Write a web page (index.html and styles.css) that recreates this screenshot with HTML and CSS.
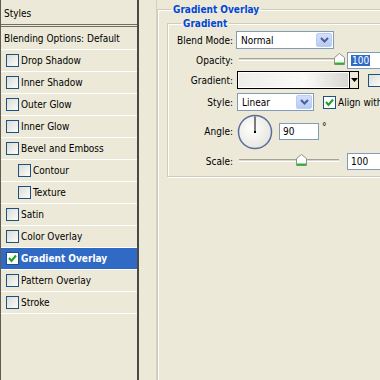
FILE: index.html
```html
<!DOCTYPE html>
<html lang="en">
<head>
	<meta charset="UTF-8">
	<title>Layer Style</title>
	<link rel="stylesheet" href="styles.css">
</head>
<body>
	<div class="dialog">
		<!--左侧样式列表-->
		<div class="styles-list">
			<div class="list-head">Styles</div>
			<div class="list-row blend">Blending Options: Default</div>
			<div class="list-row"><span class="cb"></span>Drop Shadow</div>
			<div class="list-row"><span class="cb"></span>Inner Shadow</div>
			<div class="list-row"><span class="cb"></span>Outer Glow</div>
			<div class="list-row"><span class="cb"></span>Inner Glow</div>
			<div class="list-row"><span class="cb"></span>Bevel and Emboss</div>
			<div class="list-row sub"><span class="cb"></span>Contour</div>
			<div class="list-row sub"><span class="cb"></span>Texture</div>
			<div class="list-row"><span class="cb"></span>Satin</div>
			<div class="list-row"><span class="cb"></span>Color Overlay</div>
			<div class="list-row selected"><span class="cb"><svg width="11" height="11" viewBox="0 0 11 11"><polyline points="2,5 4.5,8 9,2.5" fill="none" stroke="#21a121" stroke-width="2"/></svg></span>Gradient Overlay</div>
			<div class="list-row"><span class="cb"></span>Pattern Overlay</div>
			<div class="list-row"><span class="cb"></span>Stroke</div>
		</div>

		<!--右侧设置区-->
		<div class="settings">
			<fieldset class="group outer">
				<legend>Gradient Overlay</legend>
				<fieldset class="group inner">
					<legend>Gradient</legend>

					<div class="row r20">
						<span class="lbl">Blend Mode:</span>
						<div class="select w-blend"><span class="val">Normal</span><span class="drop"><svg width="9" height="6" viewBox="0 0 9 6"><polyline points="1,1 4.5,4.5 8,1" fill="none" stroke="#4d6185" stroke-width="2"/></svg></span></div>
					</div>

					<div class="row r20">
						<span class="lbl">Opacity:</span>
						<div class="slider w-op">
							<div class="track"></div>
							<svg class="thumb" style="left:95px" width="11" height="12" viewBox="0 0 11 12"><path d="M0.5 11.5 V4.5 L5.5 0.5 L10.5 4.5 V11.5 Z" fill="#fff" stroke="#8f9286"/><line x1="1" y1="10.5" x2="10" y2="10.5" stroke="#2bb52b" stroke-width="2"/></svg>
						</div>
						<div class="input w40"><span class="hl">100</span></div>
					</div>

					<div class="row r20">
						<span class="lbl">Gradient:</span>
						<div class="grad"><span class="grad-fill"></span><span class="grad-drop"><svg width="7" height="4" viewBox="0 0 7 4"><polygon points="0,0 7,0 3.5,4" fill="#000"/></svg></span></div>
						<span class="cb gap10"></span>
					</div>

					<div class="row r22">
						<span class="lbl">Style:</span>
						<div class="select w-style"><span class="val">Linear</span><span class="drop"><svg width="9" height="6" viewBox="0 0 9 6"><polyline points="1,1 4.5,4.5 8,1" fill="none" stroke="#4d6185" stroke-width="2"/></svg></span></div>
						<span class="cb gap9"><svg width="11" height="11" viewBox="0 0 11 11"><polyline points="2,5 4.5,8 9,2.5" fill="none" stroke="#21a121" stroke-width="2"/></svg></span>
						<span class="cb-text">Align with</span>
					</div>

					<div class="row r37">
						<span class="lbl">Angle:</span>
						<svg class="dial" width="36" height="36" viewBox="0 0 36 36">
							<defs>
								<radialGradient id="dg" cx="0.4" cy="0.4" r="0.7">
									<stop offset="0" stop-color="#ffffff"/>
									<stop offset="1" stop-color="#e4e3dc"/>
								</radialGradient>
							</defs>
							<circle cx="18" cy="18" r="16.5" fill="url(#dg)" stroke="#5b6f9a" stroke-width="1.5"/>
							<line x1="18" y1="18" x2="18" y2="2.5" stroke="#000" stroke-width="1"/>
							<rect x="17" y="17" width="2" height="2" fill="#000"/>
						</svg>
						<div class="input w40 gap6"><span>90</span></div>
						<span class="deg">°</span>
					</div>

					<div class="row r22">
						<span class="lbl">Scale:</span>
						<div class="slider w-sc">
							<div class="track"></div>
							<svg class="thumb" style="left:57px" width="11" height="12" viewBox="0 0 11 12"><path d="M0.5 11.5 V4.5 L5.5 0.5 L10.5 4.5 V11.5 Z" fill="#fff" stroke="#8f9286"/><line x1="1" y1="10.5" x2="10" y2="10.5" stroke="#2bb52b" stroke-width="2"/></svg>
						</div>
						<div class="input w40 gap8"><span>100</span></div>
					</div>
				</fieldset>
			</fieldset>
		</div>
	</div>
</body>
</html>
```

FILE: styles.css
```css
*{
	padding: 0;
	margin: 0;
	box-sizing: border-box;
}
body{
	background-color: #ece9d8;
	font-family: "DejaVu Sans Condensed", "DejaVu Sans", "Liberation Sans", sans-serif;
	font-stretch: condensed;
	font-size: 10px;
	color: #000;
	width: 380px;
	height: 380px;
	overflow: hidden;
}
.dialog{
	display: flex;
	height: 380px;
}

/* 左侧列表 */
.styles-list{
	width: 139px;
	flex: none;
	height: 380px;
	border-left: 1px solid #5e5c55;
	border-right: 2px solid #4a4944;
}
.list-head{
	height: 27px;
	padding: 8px 0 0 3px;
	border-bottom: 3px double #6f6d66;
}
.list-row{
	height: 22px;
	display: flex;
	align-items: center;
	padding-left: 5px;
	border-bottom: 1px solid #fff;
}
.list-row.blend{
	padding-left: 3px;
	height: 23px;
}
.list-row.sub{
	padding-left: 17px;
}
.list-row.selected{
	background-color: #316ac5;
	color: #fff;
	font-weight: bold;
}
.cb{
	width: 13px;
	height: 13px;
	flex: none;
	display: flex;
	align-items: center;
	justify-content: center;
	border: 1px solid #1c5180;
	background: linear-gradient(135deg, #dcdcd5, #fbfbf9);
	margin-right: 2px;
}
.list-row.selected .cb{
	background: #fff;
}

/* 右侧 */
.settings{
	flex: none;
	margin-left: 17px;
	border-left: 1px solid #d4d1c2;
	padding-left: 0;
}
.group{
	border: 1px solid #cfccbc;
	box-shadow: inset 1px 1px 0 #fff, 1px 1px 0 #fff;
	min-width: 0;
}
.group legend{
	color: #0046d5;
	font-weight: bold;
	font-size: 10px;
	line-height: 13px;
	padding: 0 2px;
}
.outer{
	width: 420px;
	height: 400px;
	margin-top: 3px;
	padding: 0 0 0 9px;
}
.outer > legend{
	margin-left: 4px;
}
.inner{
	width: 300px;
	margin-top: 1px;
	padding: 0 0 4px 0;
}
.inner > legend{
	margin-left: 13px;
}
.row{
	display: flex;
	align-items: center;
}
.r20{ height: 20px; }
.r22{ height: 22px; }
.r37{ height: 37px; }
.row.r20:nth-of-type(3){
	margin-bottom: 1px;
}
.lbl{
	width: 65px;
	text-align: right;
	margin-right: 3px;
	flex: none;
}
.select{
	height: 18px;
	border: 1px solid #7f9db9;
	background: #fff;
	display: flex;
	align-items: center;
	justify-content: space-between;
	padding: 1px;
}
.select .val{
	padding-left: 3px;
}
.w-blend{ width: 98px; }
.w-style{ width: 77px; margin-left: 1px; }
.drop{
	width: 16px;
	height: 14px;
	border: 1px solid #b9cdf8;
	background: linear-gradient(#d3defc, #b7cbf7);
	border-radius: 2px;
	display: flex;
	align-items: center;
	justify-content: center;
}
.slider{
	position: relative;
	height: 14px;
	margin-left: 3px;
}
.w-op{ width: 102px; }
.w-sc{ width: 100px; }
.track{
	margin-top: 5px;
	height: 3px;
	border-top: 1px solid #a5a397;
	border-bottom: 1px solid #fff;
	background: #dcdacb;
}
.thumb{
	position: absolute;
	top: 0;
}
.input{
	height: 17px;
	border: 1px solid #7f9db9;
	background: #fff;
	display: flex;
	align-items: center;
	padding-left: 3px;
	margin-left: 6px;
}
.w40{ width: 40px; }
.gap6{ margin-left: 6px; }
.gap8{ margin-left: 8px; }
.hl{
	background: #316ac5;
	color: #fff;
	padding: 0 1px;
}
.grad{
	width: 122px;
	height: 18px;
	border: 1px solid #000;
	margin-left: 1px;
	display: flex;
}
.grad-fill{
	flex: 1;
	border: 1px solid #fff;
	background: linear-gradient(90deg, #eeedea, #fafaf8 60%, #d8d7d2);
}
.grad-drop{
	width: 9px;
	border-left: 1px solid #000;
	background: #ece9d8;
	display: flex;
	align-items: center;
	justify-content: center;
}
.gap10{ margin-left: 9px; }
.gap9{ margin-left: 9px; background: #fff; }
.cb-text{
	white-space: nowrap;
}
.dial{
	margin-left: 1px;
	flex: none;
}
.deg{
	margin-left: 3px;
	align-self: flex-start;
	margin-top: 8px;
}
```
